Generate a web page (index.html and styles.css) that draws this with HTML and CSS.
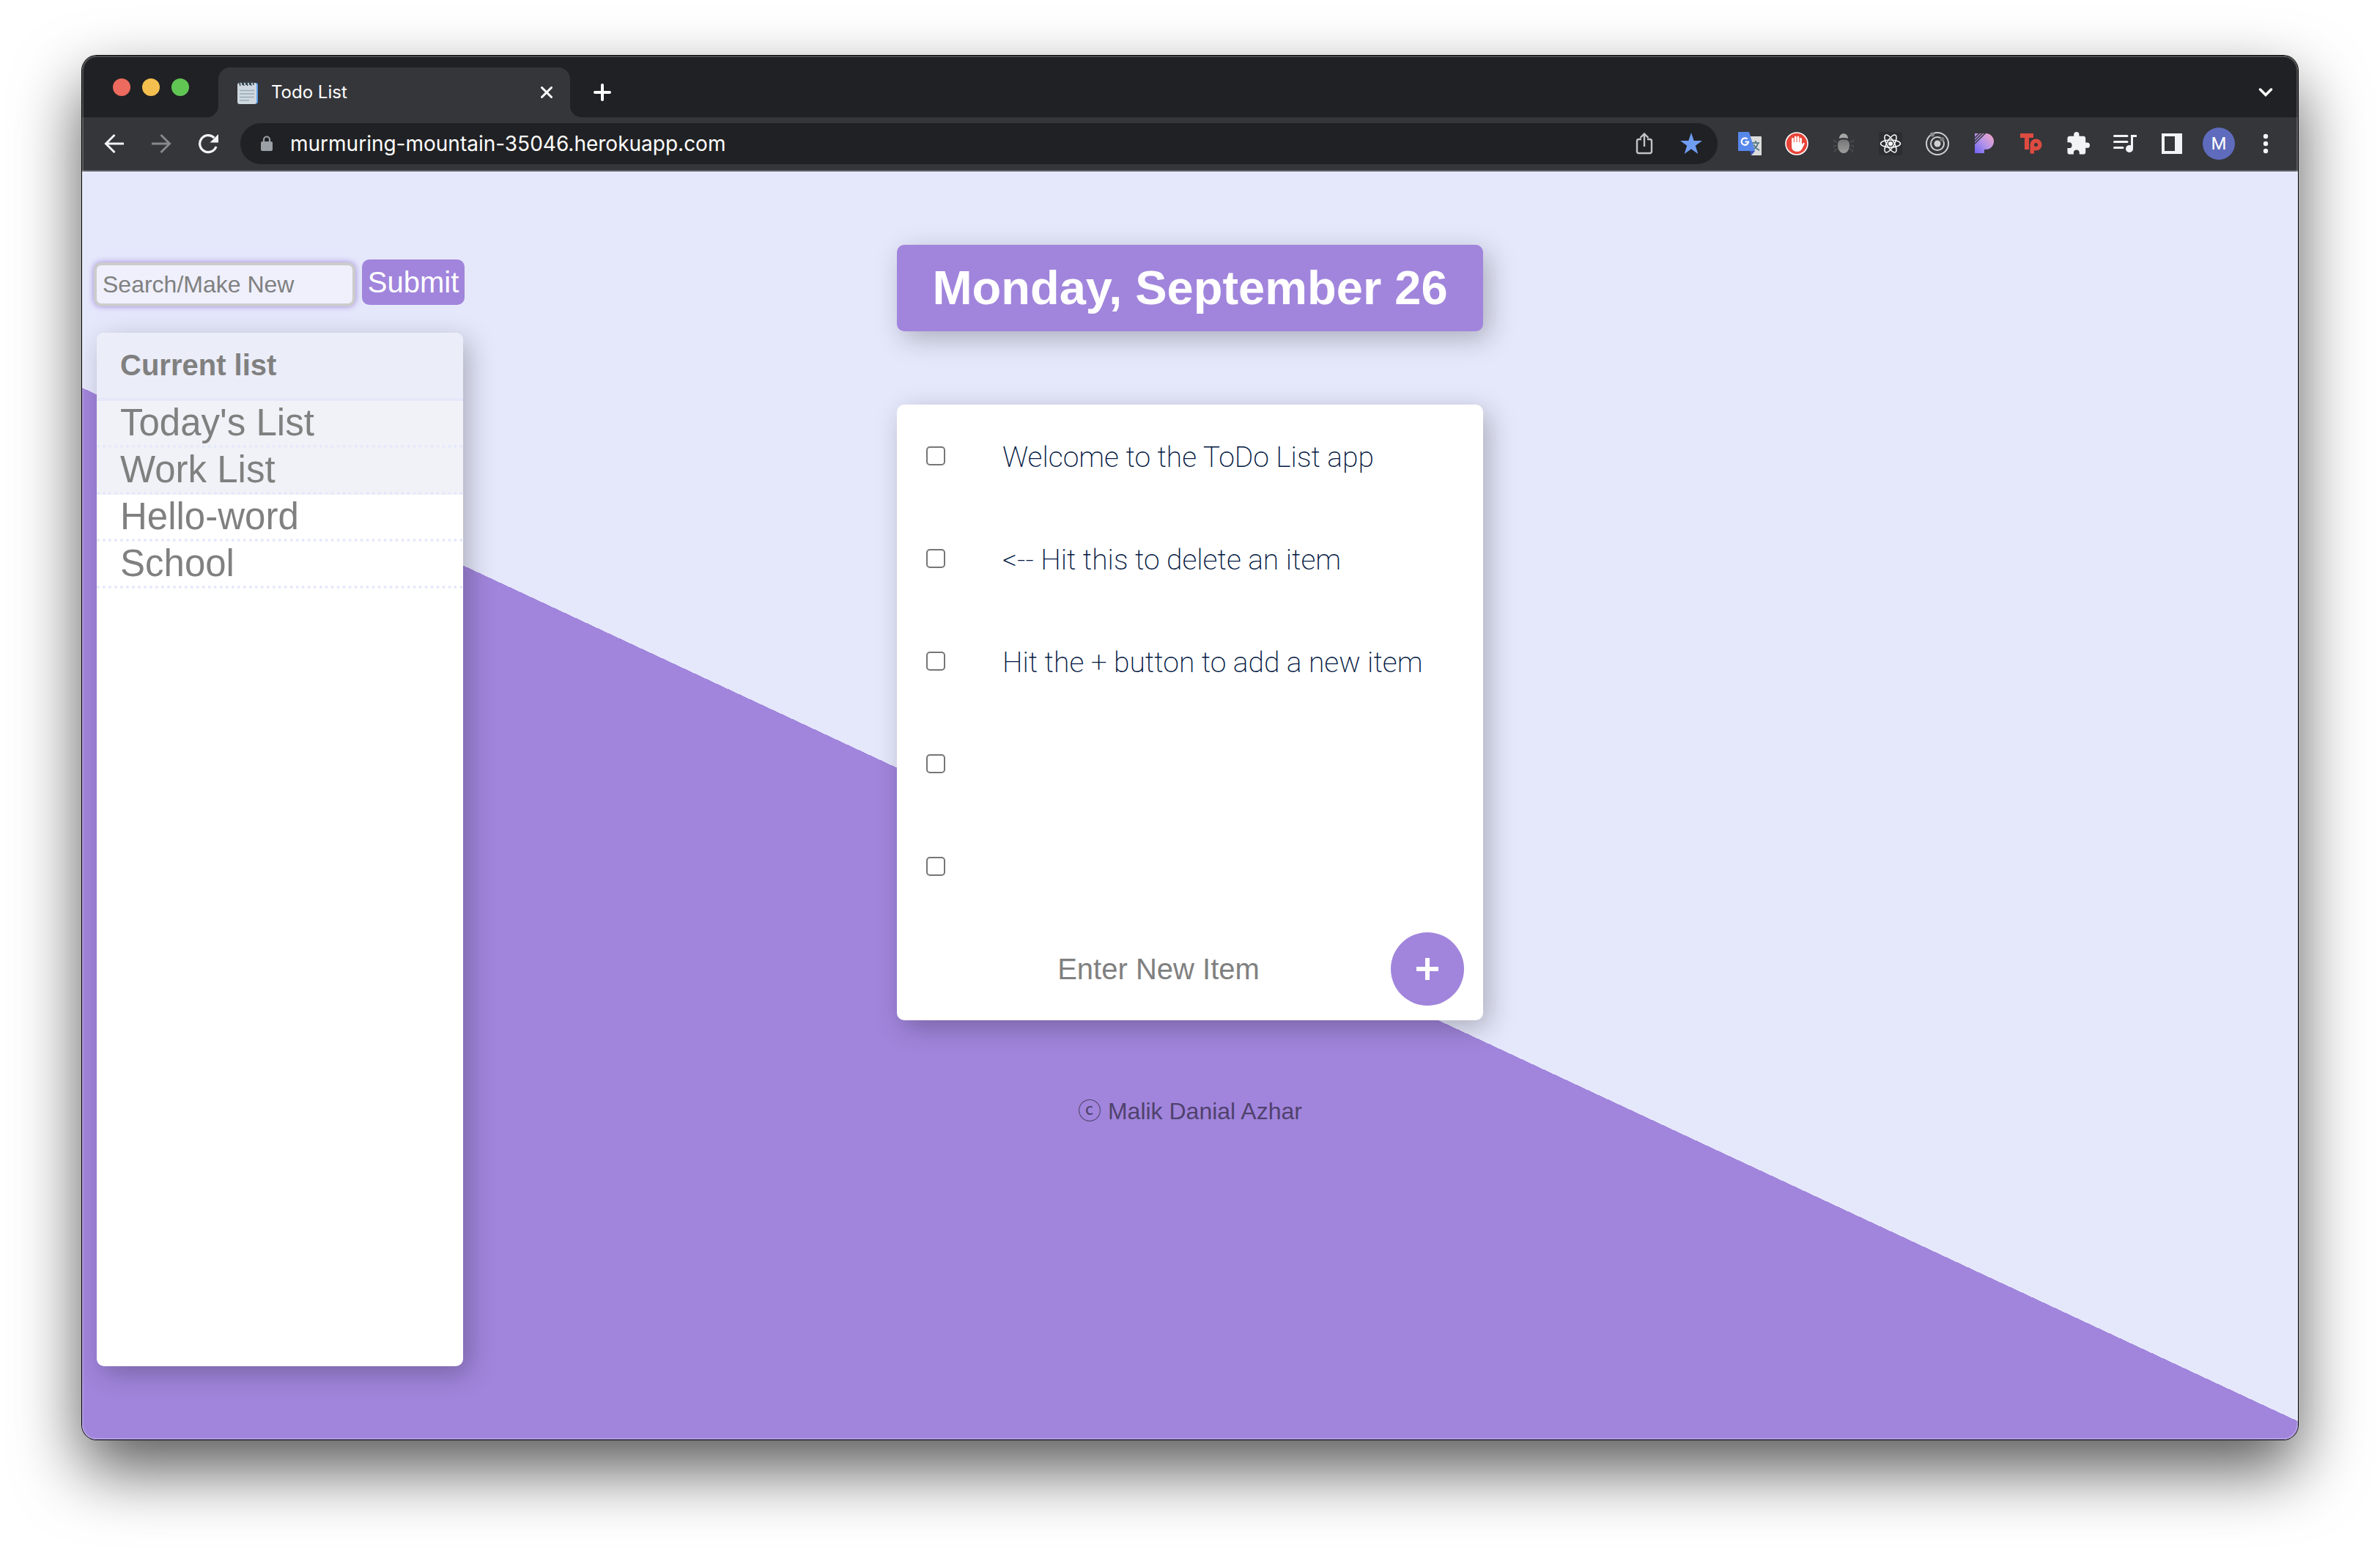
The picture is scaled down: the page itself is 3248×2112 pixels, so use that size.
FILE: index.html
```html
<!DOCTYPE html>
<html lang="en">
<head>
<meta charset="utf-8">
<title>Todo List</title>
<link rel="stylesheet" href="styles.css">
</head>
<body>
<div class="window">
  <header class="tabstrip">
    <div class="lights"><span class="light red"></span><span class="light yellow"></span><span class="light green"></span></div>
    <div class="tab">
      <svg class="favicon" width="28" height="32" viewBox="0 0 28 32"><rect x="3" y="3" width="25" height="28.500" rx="3" fill="#5a9fe8"/><rect x="0" y="3" width="26" height="29" rx="3" fill="#cfd8df"/><path d="M3 13.500h20M3 18h20M3 22.500h20M3 27h13" stroke="#9aabb8" stroke-width="1.500"/><path d="M4 7c-3-7 3-7 3-1M9 7c-3-7 3-7 3-1M14 7c-3-7 3-7 3-1M19 7c-3-7 3-7 3-1" stroke="#37474f" stroke-width="1.600" fill="none"/></svg>
      <span class="tab-title">Todo List</span>
      <button class="tab-close" aria-label="Close tab"><svg width="16" height="16" viewBox="0 0 16 16"><path d="M1.500 1.500l13 13M14.500 1.500l-13 13" stroke="#fff" stroke-width="3" stroke-linecap="round"/></svg></button>
    </div>
    <button class="tab-new" aria-label="New tab"><svg width="24" height="24" viewBox="0 0 24 24"><path d="M12 2v20M2 12h20" stroke="#fff" stroke-width="4" stroke-linecap="round"/></svg></button>
    <button class="slot tab-search" aria-label="Search tabs"><svg width="20" height="12" viewBox="0 0 20 12"><path d="M2.500 2L10 9.500 17.500 2" fill="none" stroke="#fff" stroke-width="3.500" stroke-linecap="round"/></svg></button>
  </header>
  <nav class="toolbar">
    <div class="nav-buttons">
      <button class="slot" aria-label="Back"><svg width="28" height="28" viewBox="0 0 28 28"><path d="M27 14H3M14.500 2L2.500 14l12 12" fill="none" stroke="#f1f3f4" stroke-width="3"/></svg></button>
      <button class="slot" aria-label="Forward"><svg width="28" height="28" viewBox="0 0 28 28"><path d="M1 14h24M13.500 2l12 12-12 12" fill="none" stroke="#86888a" stroke-width="3"/></svg></button>
      <button class="slot" aria-label="Reload"><svg width="28" height="28" viewBox="0 0 28 28"><path d="M25 18A11.500 11.500 0 1 1 22.300 6" fill="none" stroke="#f1f3f4" stroke-width="3.200"/><path d="M28 1v11.500H16.500z" fill="#f1f3f4"/></svg></button>
    </div>
    <div class="omnibox">
      <svg class="lock" width="16" height="22" viewBox="0 0 16 22"><rect y="8" width="16" height="13" rx="2" fill="#9aa0a6"/><path d="M4 9V5.500a4 4 0 0 1 8 0V9" fill="none" stroke="#9aa0a6" stroke-width="2.200"/></svg>
      <input class="url" type="text" aria-label="Address" value="murmuring-mountain-35046.herokuapp.com">
      <button class="slot" aria-label="Share"><svg width="24" height="30" viewBox="0 0 24 30"><path d="M8 9H4.500A2.500 2.500 0 0 0 2 11.500v14A2.500 2.500 0 0 0 4.500 28h15a2.500 2.500 0 0 0 2.500-2.500v-14A2.500 2.500 0 0 0 19.500 9H16M12 19V2M6.500 7L12 1.500 17.500 7" fill="none" stroke="#c2c3c5" stroke-width="2.400"/></svg></button>
      <button class="slot" aria-label="Bookmark"><svg width="30" height="30" viewBox="0 0 30 30"><path d="M15 0l3.700 11H30l-9.200 6.700L24.300 29 15 22.300 5.700 29l3.500-11.300L0 11h11.300z" fill="#6f9df2"/></svg></button>
    </div>
    <div class="extensions">
      <button class="slot" aria-label="Translate"><svg width="32" height="32" viewBox="0 0 32 32"><path d="M14 6h17a1 1 0 0 1 1 1v24a1 1 0 0 1-1 1H18z" fill="#dcdcdc"/><path d="M16 26h7l-5 6z" fill="#3a50b8"/><path d="M19 15h10M24 12v3M27 15c-1 5-4 8-8 10M21 17c2 4 4 6 8 8" stroke="#5a7d8c" stroke-width="2" fill="none"/><path d="M1 0h14l8 26H1a1 1 0 0 1-1-1V1a1 1 0 0 1 1-1z" fill="#5787ea"/><path d="M12.700 9.800A4.700 4.700 0 1 0 14 13.500H9.500" stroke="#fff" stroke-width="2.200" fill="none"/></svg></button>
      <button class="slot" aria-label="Ad blocker"><svg width="32" height="32" viewBox="0 0 32 32"><circle cx="16" cy="16" r="15" fill="#e8443a" stroke="#fff" stroke-width="1.600"/><path d="M10.500 17V9.500M14.200 15V7.200M17.900 15V7.200M21.500 17V9.500" stroke="#fff" stroke-width="2.800" stroke-linecap="round"/><path d="M9.100 14h13.800v3.500l1.600-2.300c1-1.200 2.700-.2 2 1.200L23 23.500c-1.500 2.500-3.500 3.300-6.200 3.300-5 0-7.700-2.500-7.700-7z" fill="#fff"/></svg></button>
      <button class="slot" aria-label="Debugger"><svg width="28" height="28" viewBox="0 0 28 28"><defs><linearGradient id="bug" x1="0" y1="0" x2="0" y2="1"><stop offset="0" stop-color="#777"/><stop offset="1" stop-color="#9c9c9c"/></linearGradient></defs><path d="M5 12l-4-1.500v-2M5 17H0v3M6 21l-4 2v3M23 12l4-1.500v-2M23 17h5v3M22 21l4 2v3" stroke="#56575a" stroke-width="1.200" fill="none"/><path d="M8 7c0-9 12-9 12 0q-6-2-12 0z" fill="#a6a6a6"/><path d="M14 8.500c5 0 8 1.500 8 7.500s-3 11-8 11-8-5-8-11 3-7.500 8-7.500z" fill="url(#bug)"/></svg></button>
      <button class="slot" aria-label="React tools"><svg width="32" height="32" viewBox="0 0 32 32"><rect width="32" height="32" rx="2" fill="#2d2e31"/><circle cx="16" cy="16" r="3" fill="#fff"/><g fill="none" stroke="#fff" stroke-width="1.500"><ellipse cx="16" cy="16" rx="13.500" ry="5"/><ellipse cx="16" cy="16" rx="13.500" ry="5" transform="rotate(60 16 16)"/><ellipse cx="16" cy="16" rx="13.500" ry="5" transform="rotate(120 16 16)"/></g></svg></button>
      <button class="slot" aria-label="Orbit"><svg width="32" height="32" viewBox="0 0 32 32"><g fill="none" stroke="#d0d0d0" stroke-width="2"><circle cx="16" cy="16" r="15"/><circle cx="16" cy="16" r="9"/></g><circle cx="16" cy="16" r="4.500" fill="#d0d0d0"/><circle cx="9" cy="3.500" r="3" fill="#8a8a8c"/><circle cx="22.500" cy="10" r="3" fill="#77777a"/></svg></button>
      <button class="slot" aria-label="Picker"><svg width="26" height="28" viewBox="0 0 26 28"><defs><linearGradient id="pg" x1="0" y1="1" x2="1" y2="0"><stop offset="0" stop-color="#6a62f5"/><stop offset=".5" stop-color="#b795e8"/><stop offset="1" stop-color="#f7a6c4"/></linearGradient></defs><path d="M0 0h15a11 11 0 0 1 0 22h-2v5H0z" fill="url(#pg)"/><path d="M-1 7l8-8M-1 11L11-1M-1 15L15-1" stroke="#35363a" stroke-width="1.500"/></svg></button>
      <button class="slot" aria-label="Tp"><svg width="30" height="28" viewBox="0 0 30 28"><path d="M0 0h18v6h-6v16H6V6H0z" fill="#dd4b41"/><path d="M13 15.500a8.500 8.500 0 1 1 6.500 8.200V28H13z" fill="#dd4b41" stroke="#35363a" stroke-width="1"/><circle cx="21.500" cy="15.500" r="2.500" fill="#35363a"/></svg></button>
      <button class="slot" aria-label="Extensions"><svg width="32" height="32" viewBox="1 1 22 22"><path d="M20.500 11H19V7c0-1.100-.9-2-2-2h-4V3.500a2.500 2.500 0 0 0-5 0V5H4c-1.100 0-2 .9-2 2v3.800h1.500a2.700 2.700 0 0 1 0 5.400H2V20c0 1.100.9 2 2 2h3.800v-1.500a2.700 2.700 0 0 1 5.400 0V22H17c1.100 0 2-.9 2-2v-4h1.500a2.500 2.500 0 0 0 0-5z" fill="#f1f3f4"/></svg></button>
      <button class="slot" aria-label="Media controls"><svg width="32" height="24" viewBox="0 0 32 24"><path d="M1.500 1.500H19M1.500 9.500H19M1.500 17.500H13M25.500 19V1.500H31" stroke="#f1f3f4" stroke-width="3" stroke-linecap="round" fill="none"/><circle cx="22" cy="19" r="5" fill="#f1f3f4"/></svg></button>
      <button class="slot" aria-label="Side panel"><svg width="28" height="28" viewBox="0 0 28 28"><path d="M0 0h28v28H0zM4 4v20h14V4z" fill="#f1f3f4" fill-rule="evenodd"/></svg></button>
      <button class="slot" aria-label="Profile"><span class="avatar">M</span></button>
      <button class="slot" aria-label="Menu"><svg width="8" height="28" viewBox="0 0 8 28"><circle cx="4" cy="4" r="3.200" fill="#f1f3f4"/><circle cx="4" cy="14" r="3.200" fill="#f1f3f4"/><circle cx="4" cy="24" r="3.200" fill="#f1f3f4"/></svg></button>
    </div>
  </nav>
  <div class="page">
    <aside class="sidebar">
      <form class="search">
        <input class="search-input" type="text" placeholder="Search/Make New" aria-label="Search or make new list">
        <button class="submit" type="button">Submit</button>
      </form>
      <section class="lists">
        <h2 class="lists-title">Current list</h2>
        <ul class="lists-items">
          <li class="list-row fixed"><a href="#">Today's List</a></li>
          <li class="list-row fixed"><a href="#">Work List</a></li>
          <li class="list-row"><a href="#">Hello-word</a></li>
          <li class="list-row"><a href="#">School</a></li>
        </ul>
      </section>
    </aside>
    <main class="main">
      <h1 class="date">Monday, September 26</h1>
      <section class="card">
        <label class="item"><input class="check" type="checkbox"><span class="item-text">Welcome to the ToDo List app</span></label>
        <label class="item"><input class="check" type="checkbox"><span class="item-text">&lt;-- Hit this to delete an item</span></label>
        <label class="item"><input class="check" type="checkbox"><span class="item-text">Hit the + button to add a new item</span></label>
        <label class="item"><input class="check" type="checkbox"><span class="item-text"></span></label>
        <label class="item"><input class="check" type="checkbox"><span class="item-text"></span></label>
        <form class="new-item">
          <input class="new-input" type="text" placeholder="Enter New Item" aria-label="New item">
          <button class="add" type="button" aria-label="Add item"><svg width="30" height="30" viewBox="0 0 30 30"><path d="M15 0v30M0 15h30" stroke="#fff" stroke-width="6"/></svg></button>
        </form>
      </section>
      <footer class="footer">ⓒ Malik Danial Azhar</footer>
    </main>
  </div>
</div>
</body>
</html>
```

FILE: styles.css
```css
:root {
  --purple: #a185dc;
  --lavender: #e5e8fb;
  --strip: #202124;
  --bar: #35363a;
}
* { box-sizing: border-box; }
body {
  margin: 0;
  min-height: 100vh;
  padding: 76px 112px 148px;
  background: #fff;
  font-family: "Liberation Sans", Arial, sans-serif;
}
button, input { font: inherit; margin: 0; padding: 0; border: 0; background: none; color: inherit; }
svg { display: block; overflow: hidden; }
h1, h2, ul { margin: 0; padding: 0; }
ul { list-style: none; }

.window {
  position: relative;
  display: flex;
  flex-direction: column;
  min-height: calc(100vh - 224px);
  border-radius: 20px;
  overflow: hidden;
  box-shadow: 0 0 0 1px #000, 0 40px 90px rgba(0, 0, 0, .66);
}
/* light rim drawn over the window's content */
.window::after {
  content: "";
  position: absolute;
  inset: 0;
  border-radius: 20px;
  box-shadow: inset 0 0 0 2px rgba(255, 255, 255, .2);
  pointer-events: none;
}

.tabstrip {
  display: flex;
  height: 84px;
  padding: 0 12px 0 42px;
  background: var(--strip);
}
.lights { display: flex; gap: 16px; width: 144px; padding-top: 31px; }
.light { width: 24px; height: 24px; border-radius: 50%; }
.red { background: #ed6a5e; }
.yellow { background: #f5bf4f; }
.green { background: #61c554; }
.tab {
  position: relative;
  display: flex;
  align-items: center;
  width: 480px;
  margin-top: 16px;
  padding: 0 24px 0 26px;
  border-radius: 16px 16px 0 0;
  background: var(--bar);
  color: #fff;
}
.tab::before, .tab::after {
  content: "";
  position: absolute;
  bottom: 0;
  width: 16px;
  height: 16px;
}
.tab::before { right: 100%; background: radial-gradient(circle at 0 0, var(--strip) 16px, var(--bar) 16px); }
.tab::after { left: 100%; background: radial-gradient(circle at 100% 0, var(--strip) 16px, var(--bar) 16px); }
.tab-title { flex: 1; padding-left: 18px; font: 400 24px/32px Inter, sans-serif; }
.tab-new { width: 88px; display: grid; place-items: center; padding-top: 16px; }
.tab-search { margin-left: auto; padding-top: 16px; }

.slot { width: 64px; height: 100%; flex: none; display: grid; place-items: center; }
.toolbar {
  display: flex;
  gap: 12px;
  height: 74px;
  padding: 0 12px;
  background: var(--bar);
  border-bottom: 2px solid #5e5f63;
}
.nav-buttons, .extensions { display: flex; }
.omnibox {
  flex: 1;
  display: flex;
  align-items: center;
  height: 56px;
  margin-top: 8px;
  padding: 0 4px 0 28px;
  border-radius: 28px;
  background: var(--strip);
}
.url { flex: 1; padding-left: 24px; color: #fff; font: 400 28px/40px Inter, sans-serif; }
.avatar {
  width: 44px;
  height: 44px;
  border-radius: 50%;
  background: #5f6bbc;
  color: #fff;
  font: 400 24px/44px Roboto, sans-serif;
  text-align: center;
}

.page {
  flex: 1;
  display: grid;
  grid-template-columns: 1fr 800px 1fr;
  align-items: start;
  padding: 100px 20px;
  background: linear-gradient(25deg, var(--purple) 50%, var(--lavender) 50%) 0 0 / 100% 2000px no-repeat;
}
.sidebar { width: 506px; margin-left: -4px; padding-top: 20px; }
.search { display: flex; justify-content: space-between; align-items: flex-end; height: 64px; }
.search-input {
  width: 357px;
  height: 60px;
  padding: 0 8px;
  border: 4px solid #ccc;
  border-radius: 10px;
  background: #eff0fc;
  font-size: 32px;
  box-shadow: 0 0 8px var(--purple);
}
::placeholder { color: #808080; opacity: 1; }
.submit {
  align-self: flex-start;
  width: 140px;
  height: 62px;
  border-radius: 10px;
  background: var(--purple);
  color: #fff;
  font-size: 40px;
}
.lists {
  width: 500px;
  min-height: 1410px;
  margin: 36px 0 0 4px;
  border-radius: 10px;
  overflow: hidden;
  background: #fff;
  color: #808080;
}
.lists-title {
  padding: 0 32px;
  border-bottom: 4px solid var(--lavender);
  background: #ebedf8;
  font-size: 40px;
  line-height: 89px;
}
.list-row {
  padding: 0 32px;
  border-bottom: 4px dotted var(--lavender);
  font-size: 51px;
  line-height: 60px;
}
.list-row a { color: inherit; text-decoration: none; }
.fixed { background: #f1f2f7; }

.date {
  border-radius: 10px;
  background: var(--purple);
  color: #fff;
  font-size: 65px;
  line-height: 118px;
  text-align: center;
  white-space: nowrap;
}
.date, .card, .lists { box-shadow: 8px 10px 36px rgba(0, 0, 0, .25); }
.card { margin-top: 100px; border-radius: 10px; background: #fff; }
.item {
  display: flex;
  align-items: center;
  gap: 78px;
  height: 140px;
  padding: 0 40px;
}
.item-text {
  padding-top: 4px;
  color: #001640;
  font: 200 39px/48px Roboto, sans-serif;
  white-space: nowrap;
}
.check {
  appearance: none;
  flex: none;
  width: 26px;
  height: 26px;
  border: 2px solid #767676;
  border-radius: 5px;
  background: #fff;
}
.new-item { display: flex; align-items: center; height: 140px; padding: 0 26px 0 40px; }
.new-input { flex: 1; font-size: 40px; text-align: center; }
.add {
  display: grid;
  place-items: center;
  width: 100px;
  height: 100px;
  border-radius: 50%;
  background: var(--purple);
}
.footer {
  margin-top: 100px;
  color: #50426e;
  font: 32px/48px "Liberation Sans", "Noto Sans CJK JP", sans-serif;
  text-align: center;
}
```
